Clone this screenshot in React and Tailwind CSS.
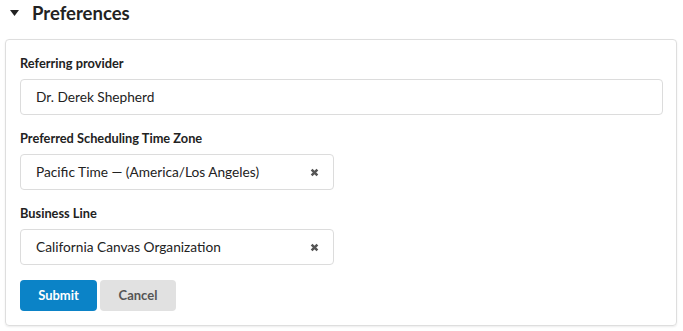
import React from 'react';

const ClearIcon = () => (
  <svg width="9" height="9" viewBox="0 0 10 10" className="text-[#555]">
    <path d="M1.8 1.8 L8.2 8.2 M8.2 1.8 L1.8 8.2" stroke="currentColor" strokeWidth="2.8" strokeLinecap="butt" />
  </svg>
);

const Field = ({ label, value, wide, clearable }) => (
  <div className="flex flex-col">
    <label className="text-[12.8px] font-bold text-[#222] leading-[14px] mb-[9px]">{label}</label>
    <div
      className={`flex items-center justify-between h-[36px] border border-[#dcdcdc] rounded-[4px] bg-white pl-[15px] pr-[14px] text-[13.7px] text-[#222] ${
        wide ? 'w-[643px]' : 'w-[314px]'
      }`}
    >
      <span>{value}</span>
      {clearable && <ClearIcon />}
    </div>
  </div>
);

const App = () => {
  return (
    <div className="w-[683px] h-[331px] bg-white overflow-hidden" style={{ fontFamily: 'Lato, "Open Sans", sans-serif' }}>
      {/* section header */}
      <div className="flex items-center h-[26px] pl-[10px]">
        <svg width="9" height="6" viewBox="0 0 9 6" className="text-[#222]">
          <path d="M0 0 H9 L4.5 6 Z" fill="currentColor" />
        </svg>
        <span className="ml-[13px] text-[18.5px] font-bold text-[#222] leading-[22px]">Preferences</span>
      </div>

      {/* card */}
      <div className="ml-[5px] mt-[13px] w-[672px] h-[287px] border border-[#dedede] rounded-[4px] shadow-[0_1px_2px_rgba(0,0,0,0.08)] pl-[14px] pt-[16px]">
        <div className="flex flex-col gap-[16px]">
          <Field label="Referring provider" value="Dr. Derek Shepherd" wide />
          <Field label="Preferred Scheduling Time Zone" value="Pacific Time — (America/Los Angeles)" clearable />
          <Field label="Business Line" value="California Canvas Organization" clearable />
        </div>
        <div className="flex gap-[3px] mt-[15px]">
          <button className="w-[77px] h-[31px] rounded-[4px] bg-[#0b83c7] text-white text-[13px] font-bold">Submit</button>
          <button className="w-[76px] h-[31px] rounded-[4px] bg-[#e1e1e1] text-[#555] text-[13px] font-bold">Cancel</button>
        </div>
      </div>
    </div>
  );
};

export default App;
